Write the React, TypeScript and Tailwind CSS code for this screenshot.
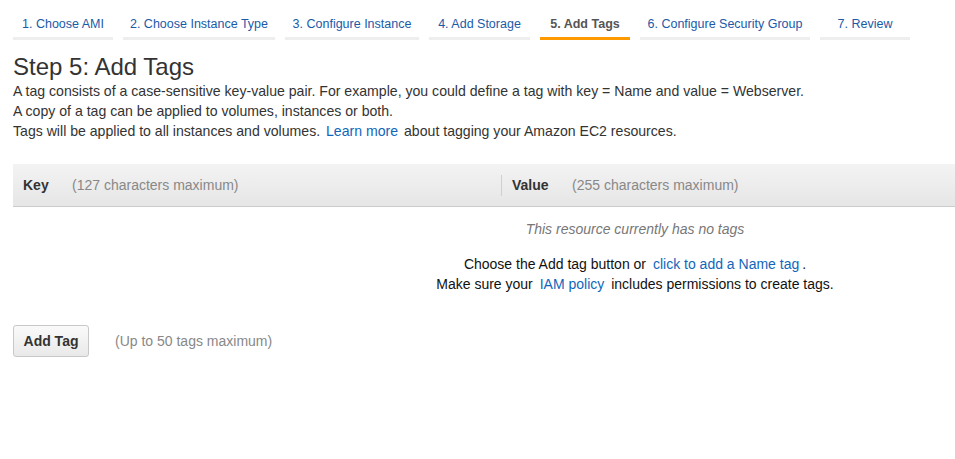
import React from "react";

const tabs = [
  { label: "1. Choose AMI", w: "w-[100px]" },
  { label: "2. Choose Instance Type", w: "w-[152px]" },
  { label: "3. Configure Instance", w: "w-[134px]" },
  { label: "4. Add Storage", w: "w-[101px]" },
  { label: "5. Add Tags", w: "w-[90px]", active: true },
  { label: "6. Configure Security Group", w: "w-[170px]" },
  { label: "7. Review", w: "w-[90px]" },
];

export default function App() {
  return (
    <div className="w-[955px] h-[459px] overflow-hidden bg-white text-[#444] font-['Liberation_Sans',Arial,sans-serif]">
      <div className="flex gap-[10px] pl-[13px] pt-[8px]">
        {tabs.map((t) => (
          <div
            key={t.label}
            className={`${t.w} h-[32px] pt-[3px] flex items-center justify-center text-[12.5px] border-b-[3px] ${
              t.active
                ? "border-[#ff9900] text-[#555] font-bold"
                : "border-[#eeeeee] text-[#1a5aa8]"
            }`}
          >
            {t.label}
          </div>
        ))}
      </div>

      <div className="pl-[13px]">
        <h1 className="text-[24px] leading-[28px] text-[#333] mt-[13px]">Step 5: Add Tags</h1>
        <div className="text-[14.1px] leading-[20px] text-[#333]">
          <p>A tag consists of a case-sensitive key-value pair. For example, you could define a tag with key = Name and value = Webserver.</p>
          <p>A copy of a tag can be applied to volumes, instances or both.</p>
          <p>
            Tags will be applied to all instances and volumes.{" "}
            <span className="text-[#1166bb] ml-[2px] mr-[2px]">Learn more</span> about tagging your Amazon EC2 resources.
          </p>
        </div>

        <div className="w-[1244px] mt-[23px]">
          <div className="h-[43px] flex items-center bg-gradient-to-b from-[#f3f3f3] to-[#e6e6e6] border-b border-[#cccccc] text-[14px]">
            <div className="w-[488px] flex items-center pl-[10px]">
              <span className="font-bold text-[#333] w-[49px]">Key</span>
              <span className="text-[#888]">(127 characters maximum)</span>
            </div>
            <div className="flex items-center border-l border-[#d0d0d0] h-[21px] pl-[10px]">
              <span className="font-bold text-[#333] w-[60px]">Value</span>
              <span className="text-[#888]">(255 characters maximum)</span>
            </div>
          </div>
          <div className="text-center text-[14px] pt-[12px]">
            <p className="italic text-[#777] leading-[20px]">This resource currently has no tags</p>
            <div className="mt-[15px] leading-[20px] text-[#111]">
              <p>
                Choose the Add tag button or{" "}
                <span className="text-[#1166bb] ml-[3px] mr-[3px]">click to add a Name tag</span>.
              </p>
              <p>
                Make sure your <span className="text-[#1166bb] ml-[3px] mr-[3px]">IAM policy</span> includes permissions to create tags.
              </p>
            </div>
          </div>
        </div>

        <div className="flex items-center mt-[31px] gap-[26px]">
          <button className="w-[76px] h-[32px] rounded-[3px] border border-[#c8c8c8] bg-gradient-to-b from-[#fafafa] to-[#e9e9e9] text-[14px] font-bold text-[#333]">
            Add Tag
          </button>
          <span className="text-[14px] text-[#888]">(Up to 50 tags maximum)</span>
        </div>
      </div>
    </div>
  );
}
